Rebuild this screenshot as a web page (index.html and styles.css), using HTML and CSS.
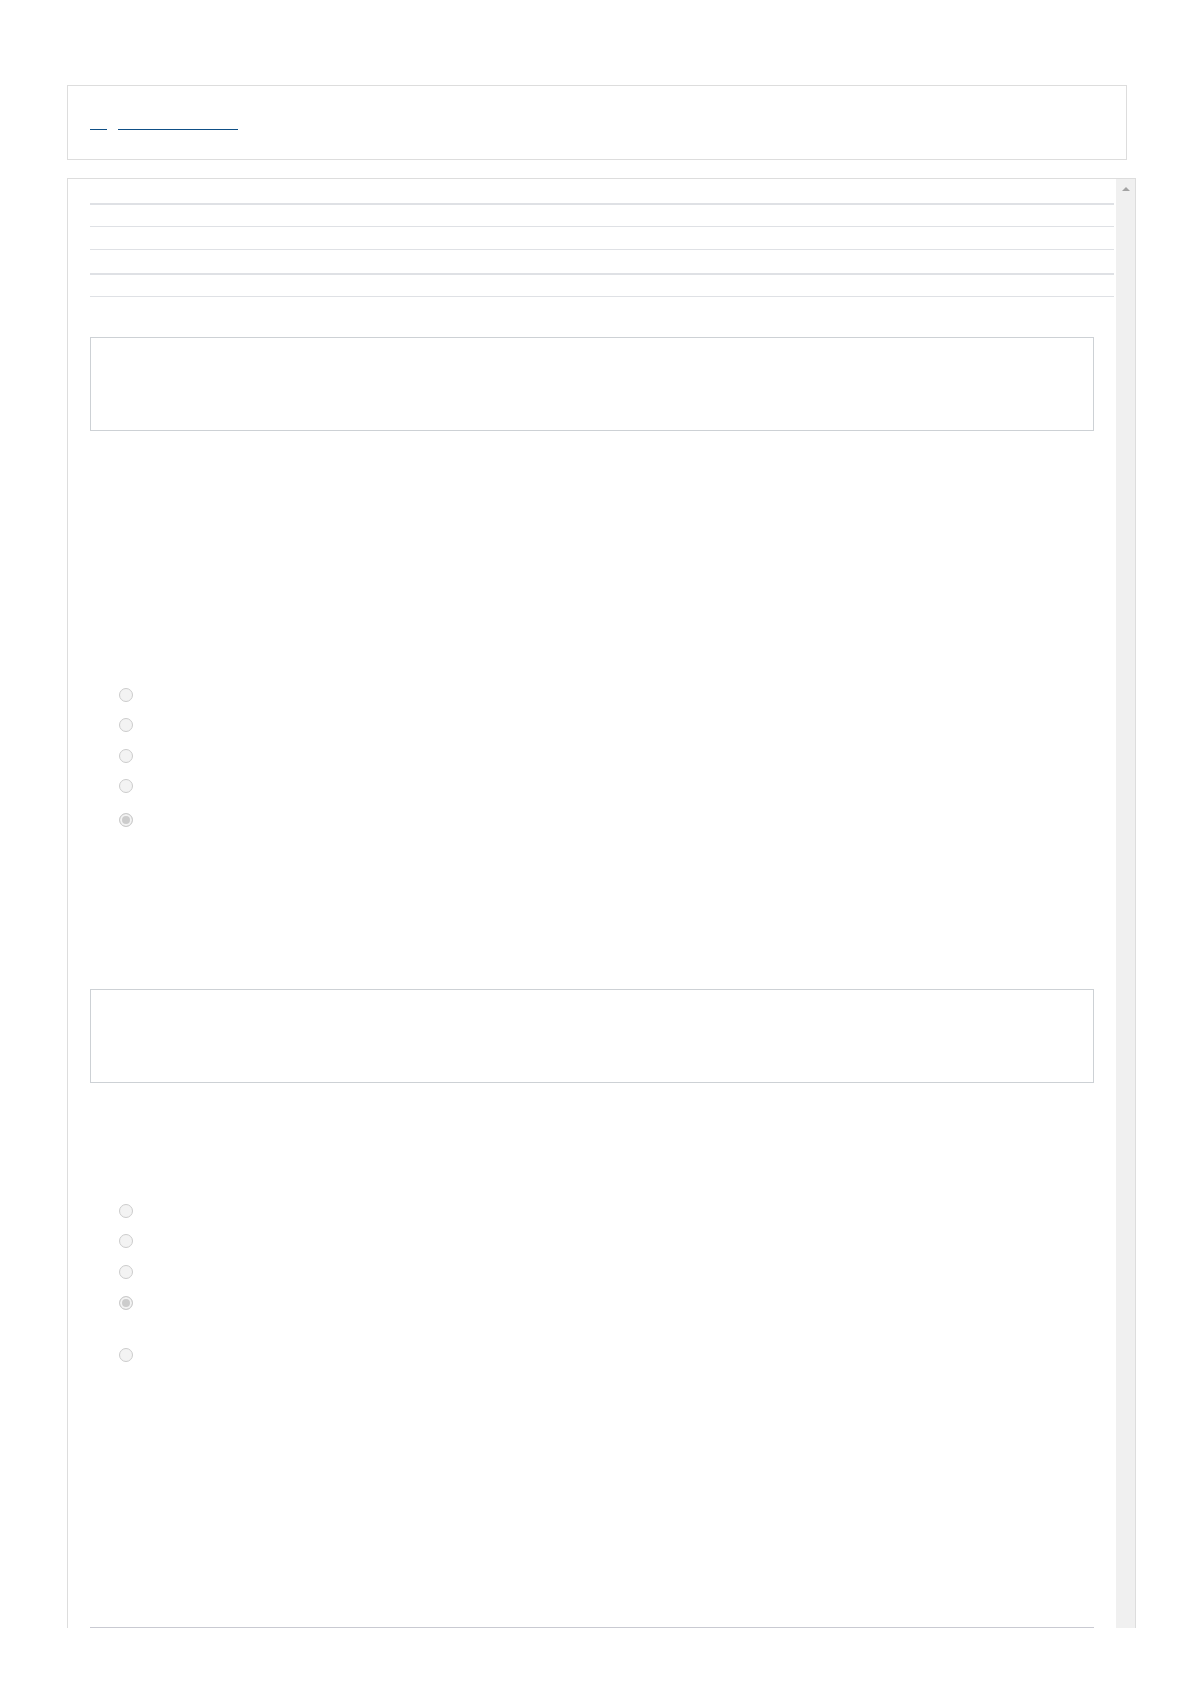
FILE: index.html
```html
<!DOCTYPE html>
<html lang="en">
<head>
  <meta charset="UTF-8">
  <meta name="viewport" content="width=device-width, initial-scale=1.0">
  <title>Quiz</title>
  <link rel="stylesheet" href="styles.css">
</head>
<body>

  <div class="page">
    <div class="breadcrumb">
      <a href="#" class="crumb crumb-home" aria-label="home"></a>
      <a href="#" class="crumb crumb-page" aria-label="page"></a>
    </div>

    <div class="panel">
      <div class="content">
        <div class="summary">
          <div class="row row-head"></div>
          <div class="row row-a"></div>
          <div class="row row-b"></div>
          <div class="row row-head row-c"></div>
          <div class="row row-last"></div>
        </div>

        <div class="question-box first-box"></div>

        <ul class="options first-options">
          <li class="h30"><input type="radio" name="q1" disabled></li>
          <li class="h31"><input type="radio" name="q1" disabled></li>
          <li class="h30"><input type="radio" name="q1" disabled></li>
          <li class="h34"><input type="radio" name="q1" disabled></li>
          <li><input type="radio" name="q1" checked disabled></li>
        </ul>

        <div class="question-box second-box"></div>

        <ul class="options second-options">
          <li class="h30"><input type="radio" name="q2" disabled></li>
          <li class="h31"><input type="radio" name="q2" disabled></li>
          <li class="h31"><input type="radio" name="q2" disabled></li>
          <li class="h52"><input type="radio" name="q2" checked disabled></li>
          <li><input type="radio" name="q2" disabled></li>
        </ul>

        <div class="divider"></div>
      </div>

      <div class="scrollbar">
        <span class="arrow-up"></span>
      </div>
    </div>
  </div>

</body>
</html>
```

FILE: styles.css
```css
body {
  margin: 0;
  font-family: "Liberation Sans", Arial, sans-serif;
  background-color: #fff;
}

.page {
  padding: 85px 0 0 67px;
}

.breadcrumb {
  box-sizing: border-box;
  width: 1060px;
  height: 75px;
  border: 1px solid #dddddd;
  padding: 28px 0 0 22px;
  display: flex;
  gap: 11px;
  align-items: flex-start;
}

.crumb {
  display: block;
  height: 15px;
  border-bottom: 1px solid #0f4f86;
}

.crumb-home {
  width: 17px;
}

.crumb-page {
  width: 120px;
}

.panel {
  box-sizing: border-box;
  margin-top: 18px;
  width: 1069px;
  height: 1450px;
  border: 1px solid #dddddd;
  border-bottom: none;
  display: flex;
  overflow: hidden;
}

.content {
  flex: 1;
  padding: 0 2px 0 22px;
}

/* table lines */
.summary {
  margin-top: 24px;
}

.row {
  border-top: 1px solid #dfe1e5;
}

.row-head {
  border-top: 2px solid #dfe1e5;
  height: 21px;
}

.row-a {
  height: 22px;
}

.row-b {
  height: 23px;
}

.row-last {
  height: 0;
}

.question-box {
  box-sizing: border-box;
  width: 1004px;
  height: 94px;
  border: 1px solid #cdd1d5;
}

.first-box {
  margin-top: 40px;
}

.second-box {
  margin-top: 162px;
}

.options {
  list-style: none;
  margin: 0;
  padding: 0 0 0 29px;
}

.first-options {
  margin-top: 257px;
}

.second-options {
  margin-top: 121px;
}

.options li {
  height: 14px;
}

.options li.h30 { height: 30px; }
.options li.h31 { height: 31px; }
.options li.h34 { height: 34px; }
.options li.h52 { height: 52px; }

.options input[type="radio"] {
  appearance: none;
  -webkit-appearance: none;
  display: block;
  box-sizing: border-box;
  width: 14px;
  height: 14px;
  margin: 0;
  border: 1px solid #cccccc;
  border-radius: 50%;
  background-color: #f3f3f3;
}

.options input[type="radio"]:checked {
  background-color: #cccccc;
  box-shadow: inset 0 0 0 2px #f3f3f3;
}

.divider {
  margin-top: 265px;
  width: 1004px;
  border-top: 1px solid #c9cad2;
}

.scrollbar {
  width: 19px;
  background-color: #f0f0f0;
  display: flex;
  justify-content: center;
  align-items: flex-start;
}

.arrow-up {
  margin-top: 8px;
  width: 0;
  height: 0;
  border-left: 4px solid transparent;
  border-right: 4px solid transparent;
  border-bottom: 4px solid #a3a3a3;
}
```
